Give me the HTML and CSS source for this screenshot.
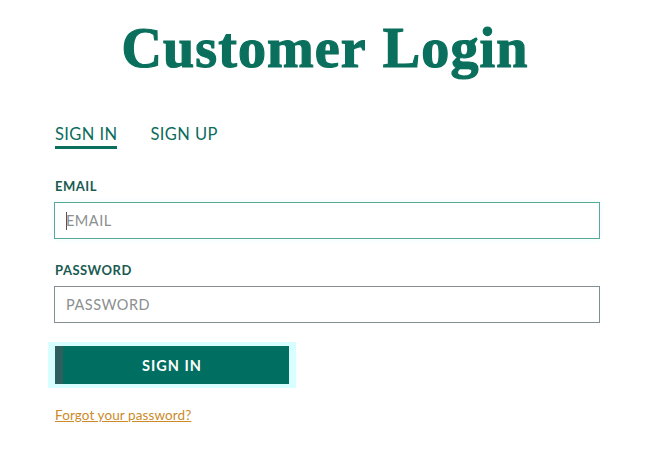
FILE: index.html
```html
<!DOCTYPE html>
<html>
<head>
<meta charset="utf-8">
<link rel="stylesheet" href="styles.css">
</head>
<body>
<h1 class="title">Customer Login</h1>
<div class="form-wrap">
  <div class="tabs">
    <span class="tab active">SIGN IN</span>
    <span class="tab">SIGN UP</span>
  </div>
  <label class="label first">EMAIL</label>
  <div class="input focused"><span class="caret"></span><span class="ph">EMAIL</span></div>
  <label class="label">PASSWORD</label>
  <div class="input"><span class="ph">PASSWORD</span></div>
  <div class="btn-glow"><div class="btn">SIGN IN</div></div>
  <a class="forgot" href="#">Forgot your password?</a>
</div>
</body>
</html>
```
FILE: styles.css
```css
html, body { margin: 0; padding: 0; background: #fff; }
body { font-family: Lato, "Noto Sans", sans-serif; color: #0b6b5c; }
.title {
  margin: 0;
  padding-top: 18px;
  text-align: center;
  font-family: "Liberation Serif", serif;
  font-weight: 700;
  font-size: 56px;
  line-height: 60px;
  letter-spacing: 1.1px;
  word-spacing: 2px;
  color: #0a705d;
  -webkit-text-stroke: 1.2px #0a705d;
}
.form-wrap { padding: 46px 0 0 55px; width: 545px; display: flex; flex-direction: column; align-items: flex-start; }
.tabs { display: flex; gap: 33px; }
.tab { font-size: 16.5px; letter-spacing: 0.4px; line-height: 20px; padding-bottom: 2px; color: #0b6b5c; }
.tab.active { border-bottom: 3px solid #0a705d; }
.label { margin-top: 23px; font-size: 13px; font-weight: 700; letter-spacing: 0.5px; line-height: 16px; color: #1a5a52; }
.label.first { margin-top: 29px; }
.label + .input { margin-top: 8px; }
.input {
  box-sizing: border-box;
  width: 546px; height: 37px; margin-left: -1px;
  border: 1.5px solid #828e92;
  display: flex; align-items: center;
  padding-left: 11px;
  font-size: 14.5px; letter-spacing: 0.5px; color: #8b8f90;
}
.input.focused { border-color: #5aa898; box-shadow: 0 0 6px #e8fbfb; }
.caret { width: 1px; height: 18px; background: #555; margin-right: -1px; }
.btn-glow { margin-top: 19px; margin-left: -7px; padding: 4px 7px; background: #d8ffff; }
.btn {
  width: 234px; height: 38px;
  background: #006e60;
  box-shadow: inset 8px 0 0 #2f5e5e;
  color: #fff; font-size: 14.5px; letter-spacing: 1px; font-weight: 700;
  display: flex; align-items: center; justify-content: center;
}
.forgot { margin-top: 19px; font-size: 13.5px; color: #cc8a2a; text-decoration: underline; letter-spacing: 0.1px; }
```
